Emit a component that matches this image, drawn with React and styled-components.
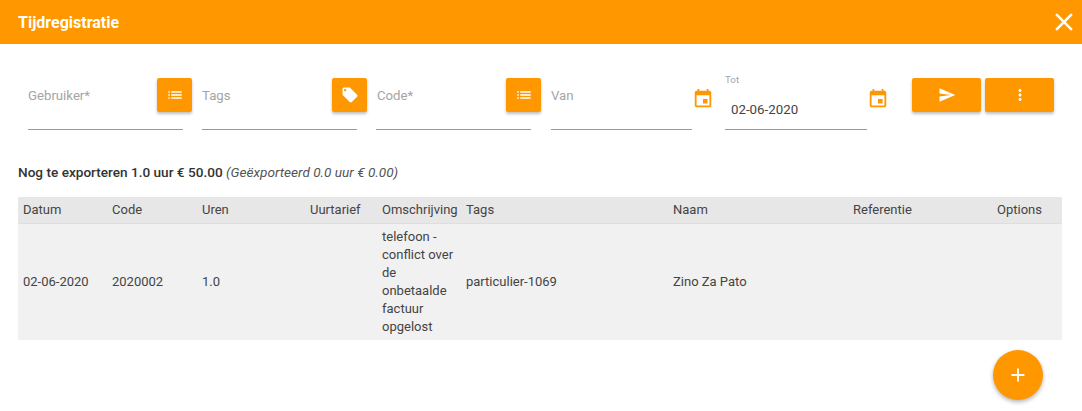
import React from "react";
import styled, { createGlobalStyle } from "styled-components";

const GlobalStyle = createGlobalStyle`
  html, body {
    margin: 0;
    padding: 0;
    background: #fff;
    font-family: Roboto, "Liberation Sans", sans-serif;
    color: #333;
  }
`;

const Orange = "#ff9800";

const Dialog = styled.div`
  width: 1082px;
  height: 411px;
  overflow: hidden;
  background: #fff;
`;

const TitleBar = styled.header`
  height: 44px;
  background: ${Orange};
  display: flex;
  align-items: center;
  justify-content: space-between;
  padding: 0 3px 0 18px;
`;

const Title = styled.h1`
  margin: 0;
  font-size: 16px;
  font-weight: 700;
  color: #fff;
`;

const CloseIcon = styled.svg`
  width: 30px;
  height: 30px;
  fill: #fff;
  display: block;
`;

const FilterRow = styled.div`
  display: flex;
  align-items: flex-start;
  padding: 34px 0 0 28px;
  height: 52px;
`;

const Field = styled.div`
  position: relative;
  width: ${(props) => props.$width}px;
  height: 51px;
  margin-right: ${(props) => props.$gap}px;
  border-bottom: 1px solid #999;
  box-sizing: content-box;
`;

const Placeholder = styled.span`
  position: absolute;
  left: ${(props) => props.$left || 0}px;
  top: 10px;
  font-size: 13.2px;
  line-height: 16px;
  color: #a4a4a4;
`;

const FloatingLabel = styled.span`
  position: absolute;
  left: 0;
  top: -4px;
  font-size: 9.75px;
  line-height: 12px;
  color: #a4a4a4;
`;

const Value = styled.span`
  position: absolute;
  left: 6px;
  top: 24px;
  font-size: 13.3px;
  line-height: 16px;
  color: #444;
`;

const SquareButton = styled.button`
  position: absolute;
  right: ${(props) => props.$right || -10}px;
  top: 0;
  width: 35px;
  height: 34px;
  padding: 0;
  border: 0;
  border-radius: 2px;
  background: ${Orange};
  display: flex;
  align-items: center;
  justify-content: center;
  box-shadow: 0 2px 3px rgba(0, 0, 0, 0.25);
`;

const ButtonIcon = styled.svg`
  width: ${(props) => props.$size || 18}px;
  height: ${(props) => props.$size || 18}px;
  fill: #fff;
  display: block;
`;

const CalendarIcon = styled.svg`
  position: absolute;
  right: -22px;
  top: 10px;
  width: 22px;
  height: 22px;
  fill: ${Orange};
`;

const Actions = styled.div`
  display: flex;
  gap: 4px;
`;

const ActionButton = styled.button`
  width: 69px;
  height: 34px;
  padding: 0;
  border: 0;
  border-radius: 2px;
  background: ${Orange};
  display: flex;
  align-items: center;
  justify-content: center;
  box-shadow: 0 2px 3px rgba(0, 0, 0, 0.25);
`;

const Summary = styled.p`
  margin: 34px 0 0 18px;
  height: 16px;
  font-size: 13.6px;
  line-height: 16px;
  font-weight: 500;
  color: #333;

  em {
    font-weight: 400;
    color: #555;
  }
`;

const Table = styled.table`
  margin: 17px 0 0 18px;
  width: 1044px;
  border-collapse: collapse;
  table-layout: fixed;
  font-size: 13px;
  color: #444;
`;

const HeadCell = styled.th`
  height: 26px;
  padding: 0 5px 1px;
  box-sizing: border-box;
  background: #e7e7e7;
  border-bottom: 1px solid #dedede;
  font-weight: 400;
  text-align: left;
`;

const Cell = styled.td`
  padding: 4px 5px;
  background: #f1f1f1;
  line-height: 18px;
  vertical-align: middle;
`;

const Fab = styled.button`
  position: absolute;
  left: 993px;
  top: 350px;
  width: 50px;
  height: 50px;
  padding: 0;
  border: 0;
  border-radius: 50%;
  background: ${Orange};
  display: flex;
  align-items: center;
  justify-content: center;
  box-shadow: 0 2px 4px rgba(0, 0, 0, 0.3);
`;

const paths = {
  list: "M3 13h2v-2H3v2zm0 4h2v-2H3v2zm0-8h2V7H3v2zm4 4h14v-2H7v2zm0 4h14v-2H7v2zM7 7v2h14V7H7z",
  tag: "M21.41 11.58l-9-9C12.05 2.22 11.55 2 11 2H4c-1.1 0-2 .9-2 2v7c0 .55.22 1.05.59 1.42l9 9c.36.36.86.58 1.41.58.55 0 1.05-.22 1.41-.59l7-7c.37-.36.59-.86.59-1.41 0-.55-.23-1.06-.59-1.42zM5.5 7C4.67 7 4 6.33 4 5.5S4.67 4 5.5 4 7 4.67 7 5.5 6.33 7 5.5 7z",
  event: "M17 12h-5v5h5v-5zM16 1v2H8V1H6v2H5c-1.11 0-1.99.9-1.99 2L3 19c0 1.1.89 2 2 2h14c1.1 0 2-.9 2-2V5c0-1.1-.9-2-2-2h-1V1h-2zm3 18H5V8h14v11z",
  send: "M2.01 21L23 12 2.01 3 2 10l15 2-15 2z",
  more: "M12 8c1.1 0 2-.9 2-2s-.9-2-2-2-2 .9-2 2 .9 2 2 2zm0 2c-1.1 0-2 .9-2 2s.9 2 2 2 2-.9 2-2-.9-2-2-2zm0 6c-1.1 0-2 .9-2 2s.9 2 2 2 2-.9 2-2-.9-2-2-2z",
  close: "M19 6.41L17.59 5 12 10.59 6.41 5 5 6.41 10.59 12 5 17.59 6.41 19 12 13.41 17.59 19 19 17.59 13.41 12z",
  add: "M19 13h-6v6h-2v-6H5v-2h6V5h2v6h6v2z",
};

const columns = [
  { label: "Datum", width: 89 },
  { label: "Code", width: 90 },
  { label: "Uren", width: 108 },
  { label: "Uurtarief", width: 72 },
  { label: "Omschrijving", width: 84 },
  { label: "Tags", width: 207 },
  { label: "Naam", width: 180 },
  { label: "Referentie", width: 144 },
  { label: "Options", width: 70 },
];

const Glyph = ({ as: Comp = ButtonIcon, name, size }) => (
  <Comp viewBox="0 0 24 24" $size={size}>
    <path d={paths[name]} />
  </Comp>
);

const App = () => (
  <Dialog>
    <GlobalStyle />
    <TitleBar>
      <Title>Tijdregistratie</Title>
      <Glyph as={CloseIcon} name="close" />
    </TitleBar>

    <FilterRow>
      <Field $width={155} $gap={19}>
        <Placeholder>Gebruiker*</Placeholder>
        <SquareButton $right={-9}><Glyph name="list" /></SquareButton>
      </Field>
      <Field $width={155} $gap={19}>
        <Placeholder>Tags</Placeholder>
        <SquareButton><Glyph name="tag" /></SquareButton>
      </Field>
      <Field $width={155} $gap={20}>
        <Placeholder $left={1}>Code*</Placeholder>
        <SquareButton><Glyph name="list" /></SquareButton>
      </Field>
      <Field $width={141} $gap={33}>
        <Placeholder>Van</Placeholder>
        <Glyph as={CalendarIcon} name="event" />
      </Field>
      <Field $width={142} $gap={45}>
        <FloatingLabel>Tot</FloatingLabel>
        <Value>02-06-2020</Value>
        <Glyph as={CalendarIcon} name="event" />
      </Field>
      <Actions>
        <ActionButton><Glyph name="send" /></ActionButton>
        <ActionButton><Glyph name="more" /></ActionButton>
      </Actions>
    </FilterRow>

    <Summary>
      Nog te exporteren 1.0 uur € 50.00 <em>(Geëxporteerd 0.0 uur € 0.00)</em>
    </Summary>

    <Table>
      <colgroup>
        {columns.map((col) => (
          <col key={col.label} width={col.width} />
        ))}
      </colgroup>
      <thead>
        <tr>
          {columns.map((col) => (
            <HeadCell key={col.label}>{col.label}</HeadCell>
          ))}
        </tr>
      </thead>
      <tbody>
        <tr>
          <Cell>02-06-2020</Cell>
          <Cell>2020002</Cell>
          <Cell>1.0</Cell>
          <Cell />
          <Cell>telefoon - conflict over de onbetaalde factuur opgelost</Cell>
          <Cell>particulier-1069</Cell>
          <Cell>Zino Za Pato</Cell>
          <Cell />
          <Cell />
        </tr>
      </tbody>
    </Table>

    <Fab><Glyph name="add" size={22} /></Fab>
  </Dialog>
);

export default App;
